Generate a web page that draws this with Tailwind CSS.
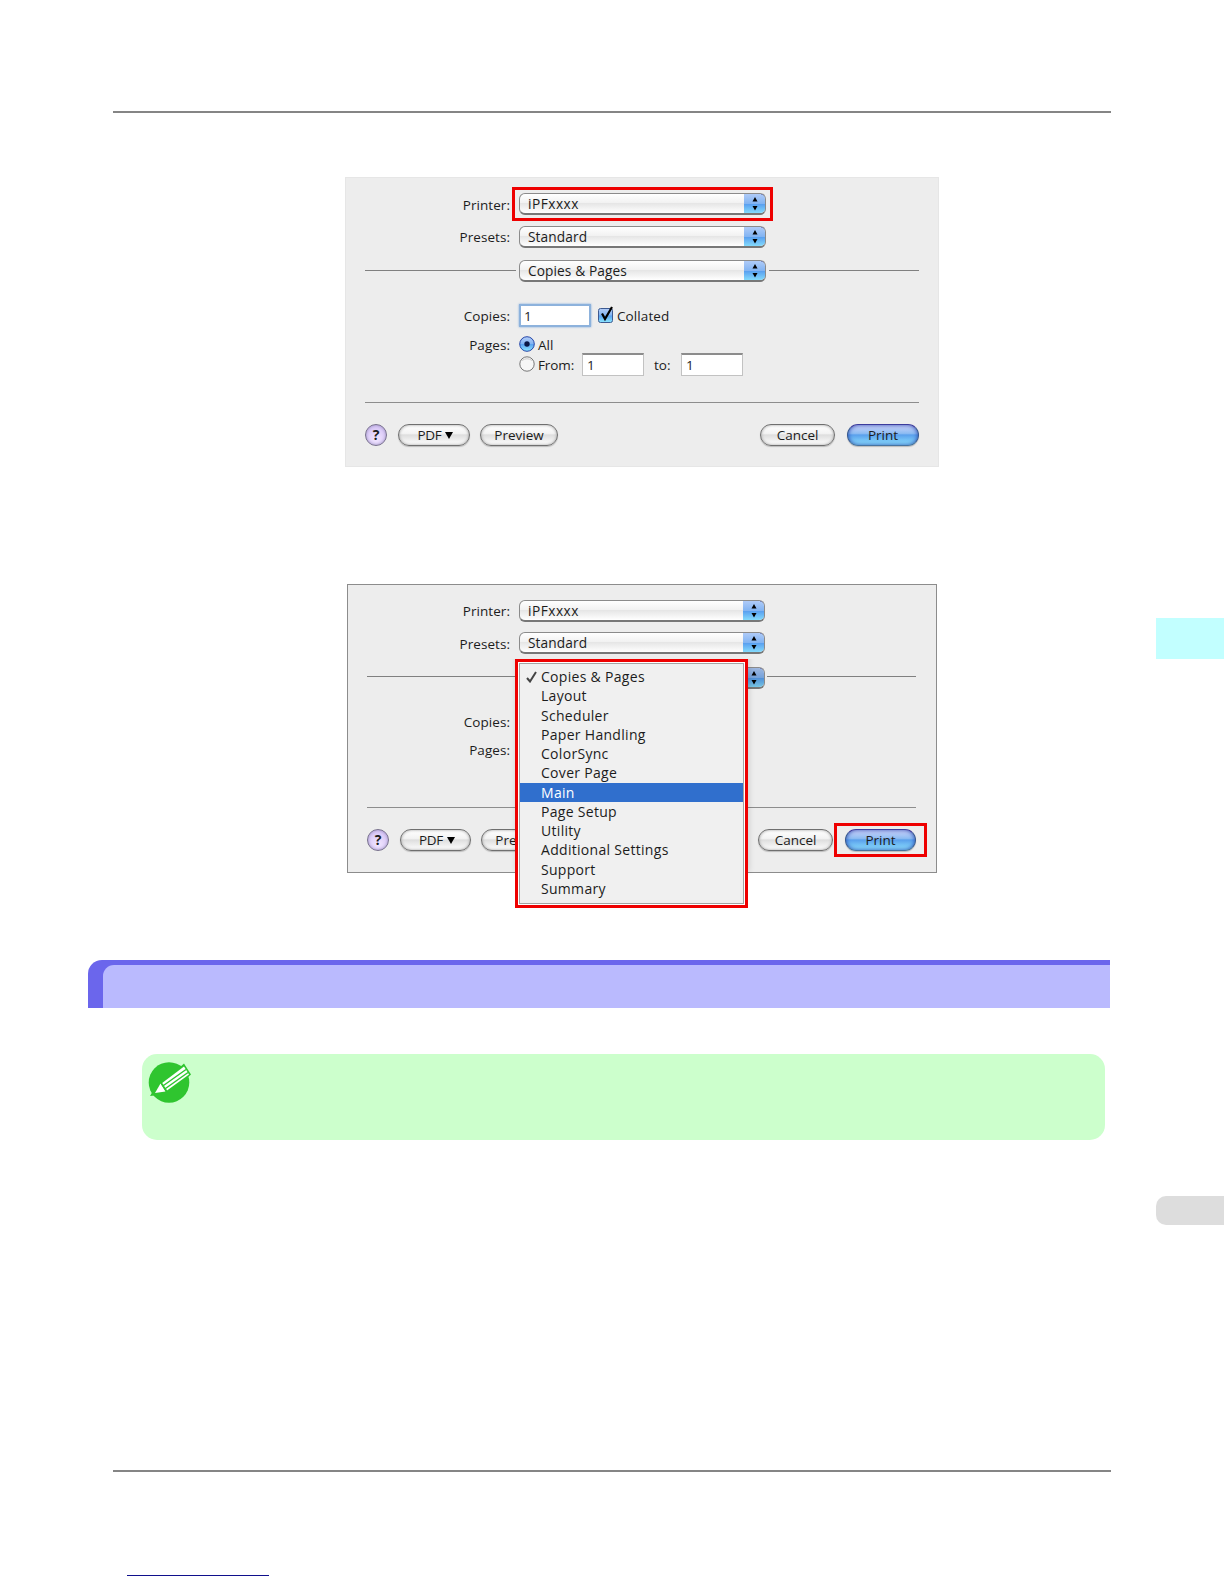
<!DOCTYPE html>
<html lang="en">
<head>
    <meta charset="UTF-8">
    <meta name="viewport" content="width=device-width, initial-scale=1.0">
    <title>Printing</title>
    <script src="https://cdn.jsdelivr.net/npm/@tailwindcss/browser@4"></script>
    <style>
        body { font-family: 'Open Sans', 'Noto Sans', sans-serif; font-size: 13.5px; font-weight: 500; color: #1c1c1c; }
        .select { display: flex; justify-content: space-between; height: 22px; line-height: 19px; padding-left: 8px; font-size: 13.700px; letter-spacing: .1px; border: 1px solid #8b8b8b; border-bottom: 2px solid #777; border-radius: 6px; background: linear-gradient(#fff, #f2f2f2 45%, #e6e6e6 50%, #fff); overflow: hidden; }
        .select svg { width: 22px; height: 22px; flex: none; margin-top: -1px; margin-right: -1px; }
        .btn { display: flex; align-items: center; justify-content: center; height: 22px; line-height: 18px; padding-bottom: 1px; border: 1px solid #6f6f6f; border-radius: 11px; background: linear-gradient(#fff, #f3f3f3 42%, #dedede 50%, #fff); box-shadow: inset 0 0 3px #999, 0 1px 1px #bbb; }
        .btn-blue { border-color: #3c3c9c #35578f #47749f; background: linear-gradient(#d0d4fa, #8dbcf2 42%, #5aa0ec 50%, #8fe4ff); box-shadow: inset 0 0 4px #2746b0, 0 1px 1px #bbb; }
        .help { border-color: #77708c; background: radial-gradient(circle at 50% 70%, #f1e6ff, #cdb9f2); font-weight: 700; box-shadow: inset 0 0 3px #9a8fc0; }
        .field { background: #fff; border: 1px solid #c2c2c2; border-top: 2px solid #8c8c8c; padding-left: 4px; line-height: 20px; }
        .label { text-align: right; flex: none; line-height: 24px; letter-spacing: .05px; }
    </style>
</head>
<body class="bg-white">

<svg class="absolute w-0 h-0">
    <defs>
        <linearGradient id="aqua" x1="0" y1="0" x2="0" y2="1">
            <stop offset="0" stop-color="#b4cdf8"/>
            <stop offset=".48" stop-color="#82b4f2"/>
            <stop offset=".52" stop-color="#5aa1f0"/>
            <stop offset="1" stop-color="#8de8ff"/>
        </linearGradient>
        <symbol id="arrows" viewBox="0 0 22 22">
            <rect width="22" height="22" fill="url(#aqua)"/>
            <path d="M0 .5H16.500Q21.500 .5 21.500 5.500V16Q21.500 20.500 17 21H0" fill="none" stroke="#2a568f"/>
            <path d="M0 .5H16.500L20 2" fill="none" stroke="#20207a"/>
            <path d="M8.500 8.500L11 4L13.500 8.500ZM8.500 13L11 17.500L13.500 13Z" fill="#000"/>
        </symbol>
    </defs>
</svg>

<div class="flex h-[1584px] overflow-hidden">
    <main class="w-[1156px] flex flex-col">
        <div class="ml-[113px] mt-[111px] w-[998px] h-[2px] bg-[#858585] shrink-0"></div>

        <!-- Print dialog -->
        <section class="ml-[345px] mt-[64px] w-[594px] h-[290px] shrink-0 bg-[#ededed] border border-[#e6e6e6] pt-[15px]">
            <div class="flex h-[33px]">
                <div class="label w-[164px]">Printer:</div>
                <div class="relative ml-[9px] w-[247px]">
                    <div class="select"><span class="tracking-[.5px]">iPFxxxx</span><svg><use href="#arrows"/></svg></div>
                    <div class="absolute -left-[7px] -top-[6px] w-[261px] h-[34px] border-3 border-[#ee0000]"></div>
                </div>
            </div>
            <div class="flex h-[34px]">
                <div class="label w-[164px] leading-[23px]!">Presets:</div>
                <div class="select ml-[9px] w-[247px]"><span>Standard</span><svg><use href="#arrows"/></svg></div>
            </div>
            <div class="flex h-[44px]">
                <div class="ml-[19px] mt-[10px] w-[151px] h-px bg-[#808080]"></div>
                <div class="select ml-[3px] w-[247px]"><span>Copies &amp; Pages</span><svg><use href="#arrows"/></svg></div>
                <div class="ml-[3px] mt-[10px] w-[150px] h-px bg-[#808080]"></div>
            </div>
            <div class="flex h-[31px]">
                <div class="label w-[164px]">Copies:</div>
                <div class="ml-[9px] w-[72px] h-[23px] bg-white border-2 border-[#8db2dc] shadow-[0_0_2px_#7ba7dc] pl-[3px] leading-[20px]">1</div>
                <svg class="ml-[7px] mt-[1px] w-[17px] h-[20px]" viewBox="0 0 17 20">
                    <rect x=".5" y="3.500" width="14" height="14" rx="2" fill="url(#aqua)" stroke="#3d5a90"/>
                    <path d="M4 8.500L7 14L14 2" fill="none" stroke="#000" stroke-width="2.200"/>
                </svg>
                <div class="ml-[2px] leading-[24px] tracking-[.1px]">Collated</div>
            </div>
            <div class="flex h-[18px]">
                <div class="label w-[164px] leading-[20px]!">Pages:</div>
                <svg class="ml-[9px] mt-[1px] w-[16px] h-[16px]" viewBox="0 0 16 16">
                    <circle cx="8" cy="8" r="7.300" fill="url(#aqua)" stroke="#2747a8"/>
                    <circle cx="8" cy="8" r="2.700" fill="#0a1745"/>
                </svg>
                <div class="ml-[3px] leading-[20px]">All</div>
            </div>
            <div class="flex h-[49px] pl-[173px]">
                <svg class="mt-[3px] w-[16px] h-[16px]" viewBox="0 0 16 16">
                    <circle cx="8" cy="8" r="7.200" fill="#f6f6f6" stroke="#777"/>
                    <path d="M3 4.500Q8 1 13 4.500" fill="none" stroke="#ccc"/>
                </svg>
                <div class="ml-[3px] w-[44px] leading-[24px] tracking-[-.1px]">From:</div>
                <div class="field w-[62px] h-[23px]">1</div>
                <div class="ml-[10px] w-[27px] leading-[24px]">to:</div>
                <div class="field w-[62px] h-[23px]">1</div>
            </div>
            <div class="ml-[19px] w-[554px] h-px bg-[#8d8d8d]"></div>
            <div class="flex ml-[19px] mt-[21px] w-[554px]">
                <div class="btn help w-[22px] text-[14px]">?</div>
                <div class="btn ml-[11px] w-[72px] pl-[3px] tracking-[-.3px]">PDF<svg class="ml-[4px] mt-[2px] w-[8px] h-[7px]" viewBox="0 0 8 7"><path d="M0 0H8L4 7Z"/></svg></div>
                <div class="btn ml-[10px] w-[78px]">Preview</div>
                <div class="btn ml-auto w-[75px]">Cancel</div>
                <div class="btn btn-blue ml-[12px] w-[72px]">Print</div>
            </div>
        </section>

        <!-- Print dialog with the pane menu open -->
        <section class="relative ml-[347px] mt-[117px] w-[590px] h-[289px] shrink-0 bg-[#ededed] border border-[#8c8c8c] pt-[15px]">
            <div class="flex h-[32px]">
                <div class="label w-[162px] leading-[23px]!">Printer:</div>
                <div class="select ml-[9px] w-[246px]"><span class="tracking-[.5px]">iPFxxxx</span><svg><use href="#arrows"/></svg></div>
            </div>
            <div class="flex h-[35px]">
                <div class="label w-[162px]">Presets:</div>
                <div class="select ml-[9px] w-[246px]"><span>Standard</span><svg><use href="#arrows"/></svg></div>
            </div>
            <div class="flex h-[44px]">
                <div class="ml-[19px] mt-[9px] w-[149px] h-px bg-[#808080]"></div>
                <div class="select ml-[3px] w-[246px]"><span></span><svg class="brightness-90"><use href="#arrows"/></svg></div>
                <div class="ml-[2px] mt-[9px] w-[149px] h-px bg-[#808080]"></div>
            </div>
            <div class="label w-[162px] h-[28px] leading-[22px]!">Copies:</div>
            <div class="label w-[162px] h-[67px] leading-[22px]!">Pages:</div>
            <div class="ml-[19px] mt-[1px] w-[549px] h-px bg-[#8d8d8d]"></div>
            <div class="flex ml-[19px] mt-[21px] w-[549px]">
                <div class="btn help w-[22px] text-[14px]">?</div>
                <div class="btn ml-[11px] w-[71px] pl-[3px] tracking-[-.3px]">PDF<svg class="ml-[4px] mt-[2px] w-[8px] h-[7px]" viewBox="0 0 8 7"><path d="M0 0H8L4 7Z"/></svg></div>
                <div class="btn ml-[10px] w-[78px]">Preview</div>
                <div class="btn ml-auto w-[75px]">Cancel</div>
                <div class="relative ml-[12px]">
                    <div class="btn btn-blue w-[71px]">Print</div>
                    <div class="absolute -left-[11px] -top-[6px] w-[93px] h-[34px] border-3 border-[#ee0000]"></div>
                </div>
            </div>

            <!-- Pane menu -->
            <div class="absolute left-[167px] top-[74px] w-[233px] h-[249px] border-3 border-[#ee0000] bg-white p-px shadow-[0_-20px_7px_-14px_#0000,1px_-36px_6px_0_#0002] [clip-path:inset(0_-12px_0_-12px)]">
                <ul class="h-full border border-[#a3a3a3] bg-[#f0f0f0] pt-[3px] text-[14px] leading-[19.250px] [&>li]:h-[19.250px] [&>li]:pl-[21px] tracking-[.3px]">
                    <li class="flex pl-[6px]!"><svg class="mt-[4px] mr-[4px] w-[11px] h-[12px]" viewBox="0 0 11 12"><path d="M1 7L4 10.500L10 1" fill="none" stroke="#444" stroke-width="2"/></svg>Copies &amp; Pages</li>
                    <li>Layout</li>
                    <li>Scheduler</li>
                    <li>Paper Handling</li>
                    <li>ColorSync</li>
                    <li>Cover Page</li>
                    <li class="bg-[#306fcd] text-white">Main</li>
                    <li>Page Setup</li>
                    <li>Utility</li>
                    <li>Additional Settings</li>
                    <li>Support</li>
                    <li>Summary</li>
                </ul>
            </div>
        </section>

        <!-- Heading bar -->
        <div class="ml-[88px] mt-[87px] w-[1022px] h-[48px] shrink-0 rounded-tl-[14px] bg-[#6b66ec] pl-[15px] pt-[5px]">
            <div class="h-full rounded-tl-[11px] bg-[#babafe]"></div>
        </div>

        <!-- Note box -->
        <div class="ml-[142px] mt-[46px] w-[963px] h-[86px] shrink-0 rounded-[15px] bg-[#ccffcc] pl-[5px] pt-[6px]">
            <svg class="w-[46px] h-[46px]" viewBox="0 0 46 46">
                <circle cx="22" cy="22.500" r="20.300" fill="#2fc52f"/>
                <path d="M3 36L6 31L12 35ZM37 3.500L44 14.500L38 20L32 8Z" fill="#2fc52f"/>
                <path d="M8 33L13.500 23.500L18.500 31.500Z" fill="#fff"/>
                <path d="M14.500 23.500L37 6.500L42 14.500L20 30.500Z" fill="#fff"/>
                <path d="M14 22.500L20 32M16.500 25.500L39 9.500M18.500 28.500L41 12.500" fill="none" stroke="#2fc52f" stroke-width="1.500"/>
            </svg>
        </div>

        <div class="ml-[113px] mt-[330px] w-[998px] h-[2px] bg-[#858585] shrink-0"></div>
        <div class="ml-[127px] mt-[103px] w-[142px] h-px bg-[#10108c] shrink-0"></div>
    </main>

    <aside class="w-[68px]">
        <div class="mt-[618px] h-[41px] bg-[#c2ffff]"></div>
        <div class="mt-[537px] h-[29px] rounded-l-[10px] bg-[#dddddd]"></div>
    </aside>
</div>

</body>
</html>
